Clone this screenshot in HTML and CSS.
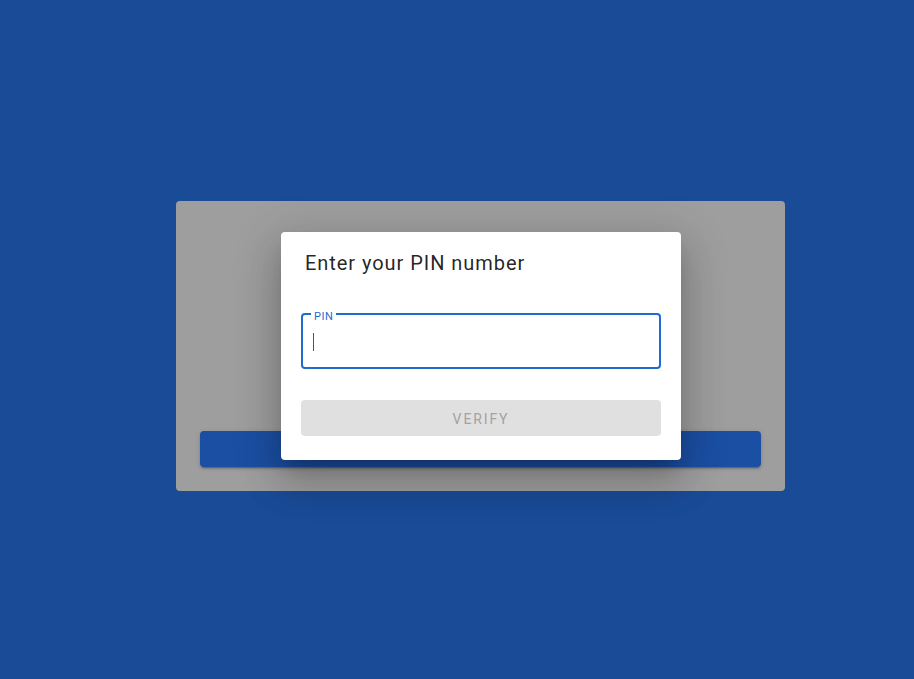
FILE: index.html
```html
<!DOCTYPE html>
<html>
<head>
<meta charset="utf-8">
<link rel="stylesheet" href="styles.css">
</head>
<body>
<div class="page">
  <div class="card">
    <div class="card-action"></div>
    <div class="dialog">
      <h2 class="dialog-title">Enter your PIN number</h2>
      <div class="field">
        <span class="field-label">PIN</span>
        <span class="caret"></span>
      </div>
      <button class="verify" disabled>VERIFY</button>
    </div>
  </div>
</div>
</body>
</html>
```
FILE: styles.css
```css
html, body {
  margin: 0;
  padding: 0;
  height: 100%;
}
body {
  background: #1a4b97;
  font-family: Roboto, "Liberation Sans", sans-serif;
}
.page {
  padding-top: 201px;
  padding-left: 176px;
}
.card {
  position: relative;
  width: 609px;
  height: 290px;
  box-sizing: border-box;
  background: #9e9e9e;
  border-radius: 4px;
  padding: 24px;
  display: flex;
  flex-direction: column;
  justify-content: flex-end;
}
.card-action {
  height: 36px;
  background: #1b4fa3;
  border-radius: 4px;
  box-shadow: 0 3px 1px -2px rgba(0,0,0,.2), 0 2px 2px 0 rgba(0,0,0,.14), 0 1px 5px 0 rgba(0,0,0,.12);
}
.dialog {
  position: absolute;
  left: 105px;
  top: 31px;
  width: 400px;
  height: 228px;
  box-sizing: border-box;
  background: #fff;
  border-radius: 4px;
  padding: 0 20px;
  box-shadow: 0 11px 15px -7px rgba(0,0,0,.2), 0 24px 38px 3px rgba(0,0,0,.14), 0 9px 46px 8px rgba(0,0,0,.12);
}
.dialog-title {
  margin: 0;
  padding: 19px 4px 0;
  height: 61px;
  box-sizing: border-box;
  font-size: 20px;
  font-weight: 400;
  line-height: 24px;
  letter-spacing: 0.95px;
  color: rgba(0,0,0,.87);
}
.field {
  position: relative;
  height: 56px;
  box-sizing: border-box;
  border: 2px solid #1e6bd1;
  border-radius: 4px;
  margin-top: 20px;
}
.field-label {
  position: absolute;
  left: 8px;
  top: -4px;
  padding: 0 3px;
  background: #fff;
  font-size: 11px;
  line-height: 11px;
  color: #1e6bd1;
  letter-spacing: 0.5px;
}
.caret {
  position: absolute;
  left: 10px;
  top: 18px;
  width: 1px;
  height: 18px;
  background: #1e5cb8;
}
.verify {
  display: block;
  width: 100%;
  height: 36px;
  margin-top: 31px;
  border: 0;
  border-radius: 4px;
  background: #e0e0e0;
  color: #a3a3a3;
  font-family: Roboto, "Liberation Sans", sans-serif;
  font-size: 14px;
  font-weight: 400;
  letter-spacing: 1.9px;
  padding: 2px 0 0;
}
```
